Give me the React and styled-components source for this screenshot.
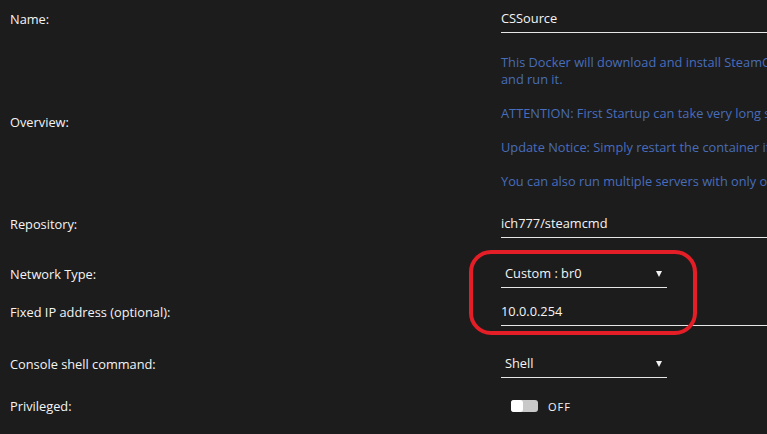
import styled, { createGlobalStyle } from "styled-components";

const GlobalStyle = createGlobalStyle`
  html, body {
    margin: 0;
    padding: 0;
    background: #1c1c1c;
    overflow: hidden;
  }
  body {
    width: 767px;
    height: 434px;
    font-family: "Open Sans", "Noto Sans", sans-serif;
    font-size: 12.8px;
    color: #f4f4f4;
  }
`;

const Page = styled.div`
  position: relative;
  width: 767px;
  height: 434px;
  overflow: hidden;
`;

const Form = styled.div`
  display: flex;
  flex-direction: column;
  padding-top: 4px;
`;

const Row = styled.div`
  display: grid;
  grid-template-columns: 501px 560px;
  align-items: center;
  margin-top: ${p => p.$space || 0}px;
`;

const Label = styled.div`
  padding-left: 10px;
`;

const Input = styled.div`
  height: 28px;
  line-height: 28px;
  border-bottom: 1px solid #e6e6e6;
  width: 560px;
  box-sizing: content-box;
`;

const Select = styled(Input)`
  position: relative;
  padding-left: 4px;
  width: 162px;
`;

const Arrow = styled.span`
  position: absolute;
  right: 5px;
  top: 12px;
  width: 0;
  height: 0;
  border-left: 3px solid transparent;
  border-right: 3px solid transparent;
  border-top: 6px solid #f2f2f2;
`;

const Overview = styled.div`
  color: #486dbb;
  line-height: 17px;
  white-space: nowrap;
  p {
    margin: 0 0 17px;
  }
  p:last-child {
    margin-bottom: 0;
  }
`;

const SwitchWrap = styled.div`
  display: flex;
  align-items: center;
  gap: 10px;
  height: 28px;
  padding-left: 10px;
`;

const Track = styled.span`
  position: relative;
  width: 27px;
  height: 12px;
  border-radius: 3px;
  background: #c8c8c8;
`;

const Knob = styled.span`
  position: absolute;
  left: 0;
  top: 0;
  width: 12px;
  height: 12px;
  border-radius: 3px;
  background: #fff;
`;

const SwitchText = styled.span`
  font-size: 11px;
  letter-spacing: 1px;
`;

const Highlight = styled.div`
  position: absolute;
  left: 469px;
  top: 250px;
  width: 220px;
  height: 77px;
  border: 4px solid #e41e26;
  border-radius: 22px;
`;

export default function App() {
  return (
    <Page>
      <GlobalStyle />
      <Form>
        <Row>
          <Label>Name:</Label>
          <Input>CSSource</Input>
        </Row>
        <Row $space={21}>
          <Label>Overview:</Label>
          <Overview>
            <p>
              This Docker will download and install SteamCMD. It will also install Counter-Strike: Source
              <br />
              and run it.
            </p>
            <p>ATTENTION: First Startup can take very long since it downloads the gameserver files!</p>
            <p>Update Notice: Simply restart the container if a newer version of the game is available.</p>
            <p>You can also run multiple servers with only one SteamCMD directory!</p>
          </Overview>
        </Row>
        <Row $space={19}>
          <Label>Repository:</Label>
          <Input>ich777/steamcmd</Input>
        </Row>
        <Row $space={21}>
          <Label>Network Type:</Label>
          <Select>
            Custom : br0
            <Arrow />
          </Select>
        </Row>
        <Row $space={9}>
          <Label>Fixed IP address (optional):</Label>
          <Input>10.0.0.254</Input>
        </Row>
        <Row $space={23}>
          <Label>Console shell command:</Label>
          <Select>
            Shell
            <Arrow />
          </Select>
        </Row>
        <Row $space={14}>
          <Label>Privileged:</Label>
          <SwitchWrap>
            <Track>
              <Knob />
            </Track>
            <SwitchText>OFF</SwitchText>
          </SwitchWrap>
        </Row>
      </Form>
      <Highlight />
    </Page>
  );
}
